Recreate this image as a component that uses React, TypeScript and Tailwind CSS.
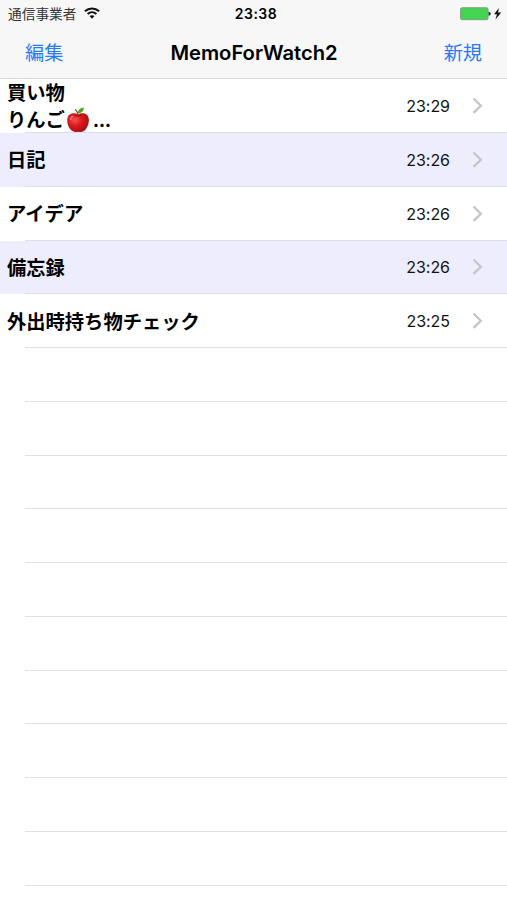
type Memo = {
    lines: string[];
    time: string;
    apple?: boolean;
};

const memos: Memo[] = [
    { lines: ["買い物", "りんご"], time: "23:29", apple: true },
    { lines: ["日記"], time: "23:26" },
    { lines: ["アイデア"], time: "23:26" },
    { lines: ["備忘録"], time: "23:26" },
    { lines: ["外出時持ち物チェック"], time: "23:25" },
];

const EMPTY_ROWS = 11;

function WifiIcon() {
    return (
        <svg className="ml-[8px] h-[12px] w-[16px]" viewBox="0 0 16 12" fill="none" stroke="#111" strokeWidth="2">
            <path d="M.9 4.3C5 .4 11 .4 15.1 4.3" />
            <path d="M3.6 7.1C6.2 4.7 9.8 4.7 12.4 7.1" />
            <path d="M8 11.8 5.5 9.1C7 7.8 9 7.8 10.5 9.1Z" fill="#111" stroke="none" />
        </svg>
    );
}

function BatteryIcon() {
    return (
        <svg className="h-[14px] w-[42px]" viewBox="0 0 42 14">
            <rect x=".5" y=".7" width="27.6" height="12" rx="1.6" fill="#43d551" stroke="#7f8c80" strokeWidth=".8" />
            <path d="M28.6 4.8C31.4 5 31.4 8.6 28.6 8.8Z" fill="#222" />
            <path d="M39 1 34 7.2H37L35.4 12.4 41.2 5.6H38Z" fill="#111" />
        </svg>
    );
}

function Apple() {
    return (
        <svg className="mb-[2px] ml-[1px] h-[26px] w-[24px] shrink-0" viewBox="0 0 24 26">
            <defs>
                <radialGradient id="apple" cx=".36" cy=".36" r=".7">
                    <stop offset="0" stopColor="#f4574f" />
                    <stop offset=".45" stopColor="#da1a20" />
                    <stop offset="1" stopColor="#a60d13" />
                </radialGradient>
            </defs>
            <path
                d="M12 7.4C14 6 18 5.4 20.6 7.6 24 10.6 23.4 17 20.4 21.3 18.4 24.4 16.4 25.4 12.4 24.8 8.6 25.6 5.8 24.6 3.8 21.6.8 17.4.2 10.8 3.2 7.8 5.6 5.6 9.8 5.8 12 7.4Z"
                fill="url(#apple)"
            />
            <path d="M8.6 7.7C10.5 9.2 13.5 9.2 15.6 7.6" fill="none" stroke="#97100f" strokeWidth="1.1" />
            <path d="M12.2 8.4C12 6 11 4 9.4 2.4" fill="none" stroke="#684420" strokeWidth="1.2" />
            <path d="M11.8 6C12 2.6 14.4.8 17.8.4 18 4 15.4 6.2 11.8 6Z" fill="#4ca62b" />
            <path d="M4.6 12.4C4.6 11 5.4 10 6.6 9.6" fill="none" stroke="#f77f76" strokeWidth="1.3" strokeLinecap="round" />
        </svg>
    );
}

function MemoRow({ memo, shaded }: { memo: Memo; shaded: boolean }) {
    return (
        <li className={`relative flex h-[53.75px] items-center pl-[7px] ${shaded ? "bg-[#eeedfe]" : "bg-white"}`}>
            <div className="flex-1 pt-[2px] text-[19.3px] leading-[27px] font-bold">
                {memo.lines.map((line, i) => (
                    <div key={line} className="flex h-[27px] items-center whitespace-nowrap">
                        <span>{line}</span>
                        {memo.apple && i === memo.lines.length - 1 && (
                            <>
                                <Apple />
                                <span className="ml-[3px] tracking-[-0.5px]">...</span>
                            </>
                        )}
                    </div>
                ))}
            </div>
            <span className="text-[16px] tracking-[-0.05px] text-[#111]">{memo.time}</span>
            <svg className="mr-[23px] ml-[22px] h-[18px] w-[12px]" viewBox="0 0 12 18" fill="none" stroke="#c4c4c8" strokeWidth="2.2">
                <path d="M1.5 1.5 8.9 8.7 1.5 15.9" />
            </svg>
            <div className="absolute right-0 bottom-0 left-[25px] h-px bg-[#dfdee8]" />
        </li>
    );
}

export default function App() {
    return (
        <div className="h-[900px] w-[507px] overflow-hidden bg-white font-[Inter,'Noto_Sans_CJK_JP',sans-serif] text-black">
            <header className="h-[79.3px] border-b border-[#dadada] bg-[#f7f7f7]">
                <div className="grid h-[27px] grid-cols-3 items-center pr-[5px] pl-[8px]">
                    <div className="flex items-center">
                        <span className="pt-[1px] text-[13.7px] text-[#333]">通信事業者</span>
                        <WifiIcon />
                    </div>
                    <span className="pl-[2px] text-center text-[14px] font-semibold tracking-[0.5px]">23:38</span>
                    <div className="flex justify-end">
                        <BatteryIcon />
                    </div>
                </div>
                <div className="grid h-[51px] grid-cols-[80px_1fr_80px] items-center px-[25px]">
                    <button className="pt-[2px] text-left text-[19.2px] text-[#2879f6]">編集</button>
                    <h1 className="pt-[1px] pl-[1px] text-center text-[20.2px] font-semibold">MemoForWatch2</h1>
                    <button className="pt-[2px] text-right text-[19.2px] text-[#2879f6]">新規</button>
                </div>
            </header>
            <ul>
                {memos.map((memo, i) => (
                    <MemoRow key={memo.lines[0]} memo={memo} shaded={i % 2 === 1} />
                ))}
                {Array.from({ length: EMPTY_ROWS }, (_, i) => (
                    <li key={i} className="h-[53.75px] pl-[25px]">
                        <div className="h-full border-b border-[#e1e1e3]" />
                    </li>
                ))}
            </ul>
        </div>
    );
}
